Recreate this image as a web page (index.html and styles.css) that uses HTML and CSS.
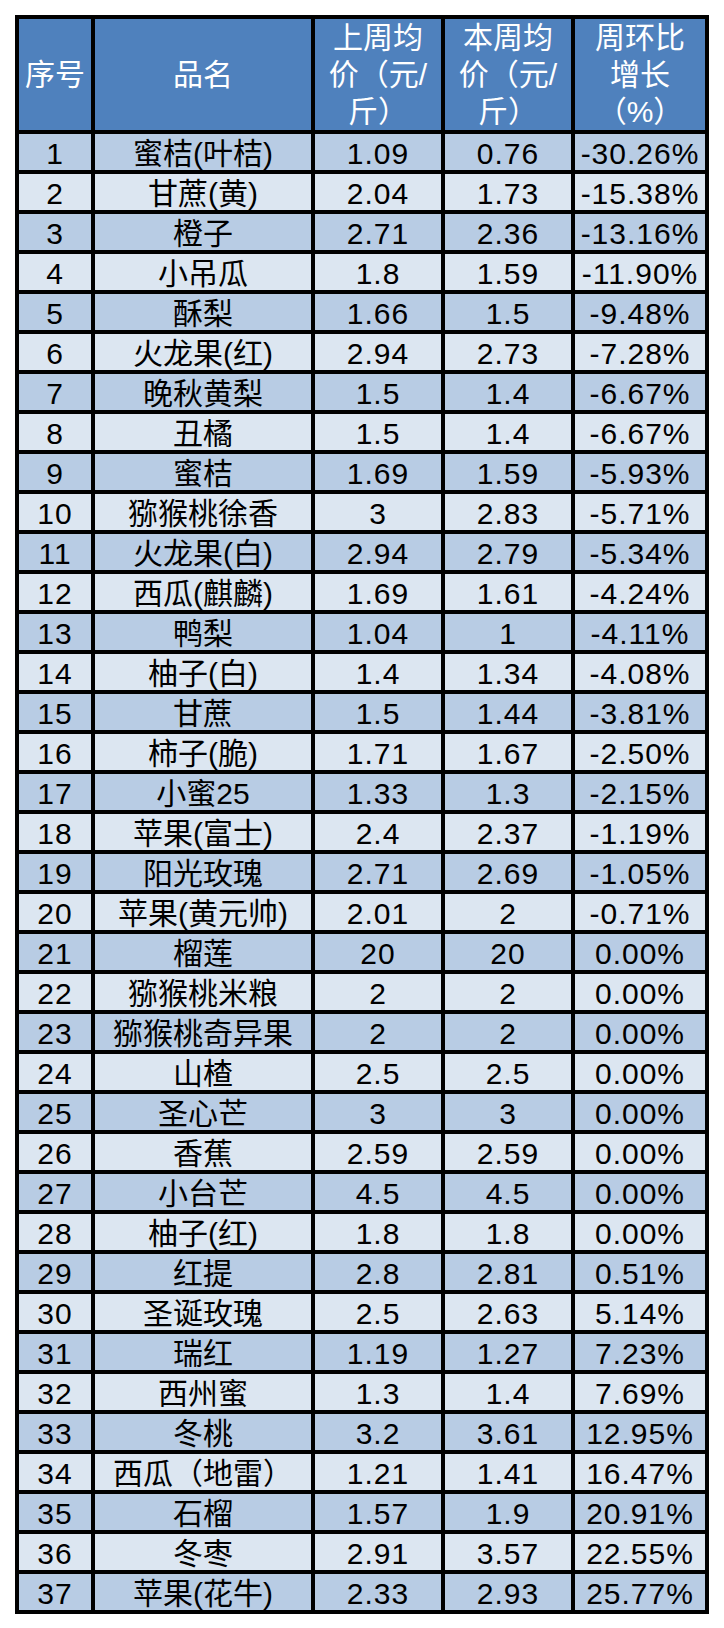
FILE: index.html
```html
<!DOCTYPE html>
<html lang="zh-CN">
<head>
<meta charset="utf-8">
<title>水果周均价</title>
<link rel="stylesheet" href="styles.css">
</head>
<body>
<table class="price-table">
  <colgroup>
    <col class="c-no"><col class="c-name"><col class="c-last"><col class="c-this"><col class="c-ratio">
  </colgroup>
  <thead>
    <tr>
      <th>序号</th>
      <th>品名</th>
      <th>上周均<br>价（元/<br>斤）</th>
      <th>本周均<br>价（元/<br>斤）</th>
      <th>周环比<br>增长<br>（%）</th>
    </tr>
  </thead>
  <tbody>
    <tr><td>1</td><td class="name">蜜桔(叶桔)</td><td>1.09</td><td>0.76</td><td>-30.26%</td></tr>
    <tr><td>2</td><td class="name">甘蔗(黄)</td><td>2.04</td><td>1.73</td><td>-15.38%</td></tr>
    <tr><td>3</td><td class="name">橙子</td><td>2.71</td><td>2.36</td><td>-13.16%</td></tr>
    <tr><td>4</td><td class="name">小吊瓜</td><td>1.8</td><td>1.59</td><td>-11.90%</td></tr>
    <tr><td>5</td><td class="name">酥梨</td><td>1.66</td><td>1.5</td><td>-9.48%</td></tr>
    <tr><td>6</td><td class="name">火龙果(红)</td><td>2.94</td><td>2.73</td><td>-7.28%</td></tr>
    <tr><td>7</td><td class="name">晚秋黄梨</td><td>1.5</td><td>1.4</td><td>-6.67%</td></tr>
    <tr><td>8</td><td class="name">丑橘</td><td>1.5</td><td>1.4</td><td>-6.67%</td></tr>
    <tr><td>9</td><td class="name">蜜桔</td><td>1.69</td><td>1.59</td><td>-5.93%</td></tr>
    <tr><td>10</td><td class="name">猕猴桃徐香</td><td>3</td><td>2.83</td><td>-5.71%</td></tr>
    <tr><td>11</td><td class="name">火龙果(白)</td><td>2.94</td><td>2.79</td><td>-5.34%</td></tr>
    <tr><td>12</td><td class="name">西瓜(麒麟)</td><td>1.69</td><td>1.61</td><td>-4.24%</td></tr>
    <tr><td>13</td><td class="name">鸭梨</td><td>1.04</td><td>1</td><td>-4.11%</td></tr>
    <tr><td>14</td><td class="name">柚子(白)</td><td>1.4</td><td>1.34</td><td>-4.08%</td></tr>
    <tr><td>15</td><td class="name">甘蔗</td><td>1.5</td><td>1.44</td><td>-3.81%</td></tr>
    <tr><td>16</td><td class="name">柿子(脆)</td><td>1.71</td><td>1.67</td><td>-2.50%</td></tr>
    <tr><td>17</td><td class="name">小蜜25</td><td>1.33</td><td>1.3</td><td>-2.15%</td></tr>
    <tr><td>18</td><td class="name">苹果(富士)</td><td>2.4</td><td>2.37</td><td>-1.19%</td></tr>
    <tr><td>19</td><td class="name">阳光玫瑰</td><td>2.71</td><td>2.69</td><td>-1.05%</td></tr>
    <tr><td>20</td><td class="name">苹果(黄元帅)</td><td>2.01</td><td>2</td><td>-0.71%</td></tr>
    <tr><td>21</td><td class="name">榴莲</td><td>20</td><td>20</td><td>0.00%</td></tr>
    <tr><td>22</td><td class="name">猕猴桃米粮</td><td>2</td><td>2</td><td>0.00%</td></tr>
    <tr><td>23</td><td class="name">猕猴桃奇异果</td><td>2</td><td>2</td><td>0.00%</td></tr>
    <tr><td>24</td><td class="name">山楂</td><td>2.5</td><td>2.5</td><td>0.00%</td></tr>
    <tr><td>25</td><td class="name">圣心芒</td><td>3</td><td>3</td><td>0.00%</td></tr>
    <tr><td>26</td><td class="name">香蕉</td><td>2.59</td><td>2.59</td><td>0.00%</td></tr>
    <tr><td>27</td><td class="name">小台芒</td><td>4.5</td><td>4.5</td><td>0.00%</td></tr>
    <tr><td>28</td><td class="name">柚子(红)</td><td>1.8</td><td>1.8</td><td>0.00%</td></tr>
    <tr><td>29</td><td class="name">红提</td><td>2.8</td><td>2.81</td><td>0.51%</td></tr>
    <tr><td>30</td><td class="name">圣诞玫瑰</td><td>2.5</td><td>2.63</td><td>5.14%</td></tr>
    <tr><td>31</td><td class="name">瑞红</td><td>1.19</td><td>1.27</td><td>7.23%</td></tr>
    <tr><td>32</td><td class="name">西州蜜</td><td>1.3</td><td>1.4</td><td>7.69%</td></tr>
    <tr><td>33</td><td class="name">冬桃</td><td>3.2</td><td>3.61</td><td>12.95%</td></tr>
    <tr><td>34</td><td class="name">西瓜（地雷）</td><td>1.21</td><td>1.41</td><td>16.47%</td></tr>
    <tr><td>35</td><td class="name">石榴</td><td>1.57</td><td>1.9</td><td>20.91%</td></tr>
    <tr><td>36</td><td class="name">冬枣</td><td>2.91</td><td>3.57</td><td>22.55%</td></tr>
    <tr><td>37</td><td class="name">苹果(花牛)</td><td>2.33</td><td>2.93</td><td>25.77%</td></tr>
  </tbody>
</table>
</body>
</html>
```
FILE: styles.css
```css
html, body {
  margin: 0;
  padding: 0;
  background: #ffffff;
}
body {
  padding: 15px;
  font-family: "Liberation Sans", "Noto Sans CJK SC", sans-serif;
}
.price-table {
  table-layout: fixed;
  width: 694px;
  border-collapse: separate;
  border-spacing: 4px;
  background: #000000;
  font-size: 30px;
}
.c-no { width: 72px; }
.c-name { width: 216px; }
.c-last { width: 126px; }
.c-this { width: 126px; }
.c-ratio { width: 130px; }
.price-table th,
.price-table td {
  padding: 0;
  text-align: center;
  vertical-align: middle;
  white-space: nowrap;
}
.price-table thead tr {
  height: 110px;
}
.price-table th {
  background: #4f81bd;
  color: #ffffff;
  font-weight: normal;
  line-height: 37px;
}
.price-table tbody tr {
  height: 36px;
}
.price-table td {
  padding-top: 3px;
  line-height: 33px;
  vertical-align: top;
  color: #000000;
  letter-spacing: 1px;
}
.price-table td.name {
  letter-spacing: 0;
}
.price-table tbody tr:nth-child(odd) td { background: #b8cce4; }
.price-table tbody tr:nth-child(even) td { background: #dce6f1; }
```
